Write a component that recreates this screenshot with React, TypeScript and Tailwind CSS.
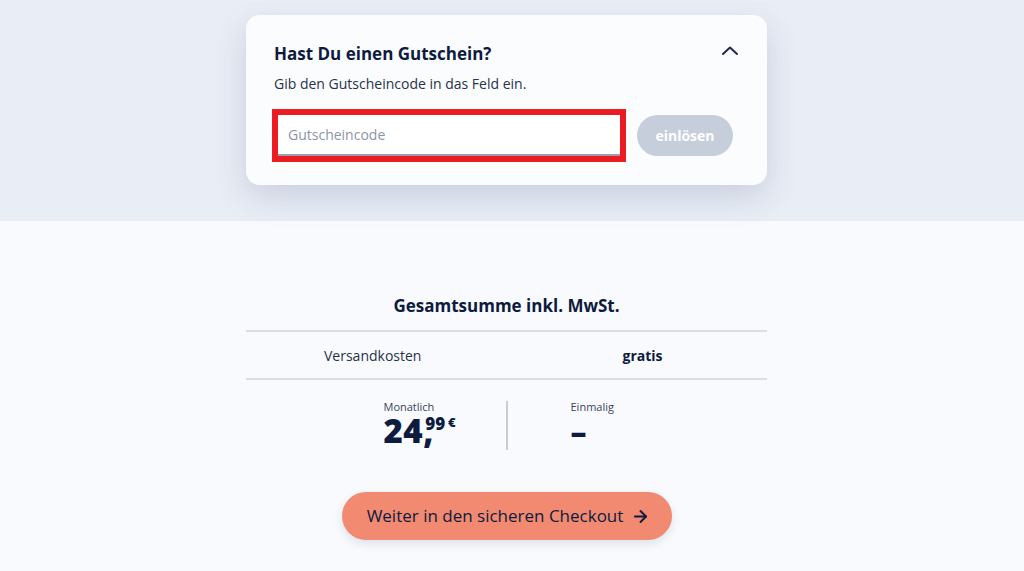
import React from 'react';
import { ArrowRight } from 'lucide-react';

const font = { fontFamily: '"Open Sans", "Noto Sans", sans-serif' };

const VoucherCard: React.FC = () => {
  return (
    <div className="mx-auto mt-[15px] w-[521px] rounded-[14px] bg-[#fbfcfe] px-[26px] pt-[27px] pb-[23px] shadow-[0_12px_32px_rgba(40,60,110,0.16)]">
      <div className="flex items-center justify-between">
        <h2 className="pl-[2px] text-[17px] font-bold leading-6 text-[#0d1b3e]">Hast Du einen Gutschein?</h2>
        <svg width="18" height="12" viewBox="0 0 18 12" className="mr-[2px] -mt-[6px]" fill="none">
          <polyline points="2,9 9,2.5 16,9" stroke="#1b2a4e" strokeWidth="2" strokeLinecap="round" strokeLinejoin="round" />
        </svg>
      </div>
      <p className="mt-[8px] pl-[2px] text-[14px] leading-5 text-[#27324a]">Gib den Gutscheincode in das Feld ein.</p>
      <div className="mt-[15px] flex items-center gap-[11px]">
        <div className="w-[354px] border-[6px] border-[#ec1c24]">
          <input
            placeholder="Gutscheincode"
            className="block h-[41px] w-full border-b-2 border-[#9aa1ad] bg-white px-[10px] text-[14px] text-[#0d1b3e] outline-none placeholder:text-[#8c95a6]"
          />
        </div>
        <button className="h-[41px] w-[96px] rounded-full bg-[#c6cedb] text-[14px] font-bold text-white">
          einlösen
        </button>
      </div>
    </div>
  );
};

const Summary: React.FC = () => {
  return (
    <div className="mx-auto w-[521px] pt-[73px]">
      <h3 className="text-center text-[17px] font-bold leading-6 text-[#0d1b3e]">Gesamtsumme inkl. MwSt.</h3>
      <div className="mt-[12px] grid h-[50px] grid-cols-2 items-center border-y-2 border-[#dadee7] text-[14px]">
        <span className="pl-[78px] text-[#27324a]">Versandkosten</span>
        <span className="pl-[116px] font-bold text-[#0d1b3e]">gratis</span>
      </div>
      <div className="mt-[19px] flex justify-center">
        <div className="w-[122px]">
          <div className="text-[11px] leading-4 text-[#3a445a]">Monatlich</div>
          <div className="flex items-start text-[#0d1b3e]">
            <span className="text-[33px] font-extrabold leading-[32px] tracking-[0.5px]">24</span>
            <span className="w-[2px] text-[33px] font-extrabold leading-[32px]">,</span>
            <span className="text-[17px] font-extrabold leading-[17px]">99</span>
            <span className="ml-[3px] mt-[1px] text-[13px] font-extrabold leading-[13px]">€</span>
          </div>
        </div>
        <div className="mt-[2px] h-[49px] w-[2px] bg-[#c8cdd6]" />
        <div className="w-[122px] pl-[63px]">
          <div className="text-[11px] leading-4 text-[#3a445a]">Einmalig</div>
          <div className="text-[32px] font-extrabold leading-[32px] text-[#0d1b3e]">–</div>
        </div>
      </div>
      <div className="mt-[42px] flex justify-center pb-8">
        <button className="flex h-[48px] w-[330px] items-center justify-center gap-[8px] rounded-full bg-[#f18a71] pl-[4px] text-[17px] font-medium text-[#0d1b3e] shadow-[0_4px_10px_rgba(40,60,110,0.12)]">
          Weiter in den sicheren Checkout
          <ArrowRight size={19} strokeWidth={2.5} />
        </button>
      </div>
    </div>
  );
};

export default function App() {
  return (
    <div className="flex min-h-screen flex-col bg-[#f8fafd]" style={font}>
      <div className="h-[221px] bg-[#e9edf5]">
        <div className="w-[1013px]">
          <VoucherCard />
        </div>
      </div>
      <div className="flex-1">
        <div className="w-[1013px]">
          <Summary />
        </div>
      </div>
    </div>
  );
}
